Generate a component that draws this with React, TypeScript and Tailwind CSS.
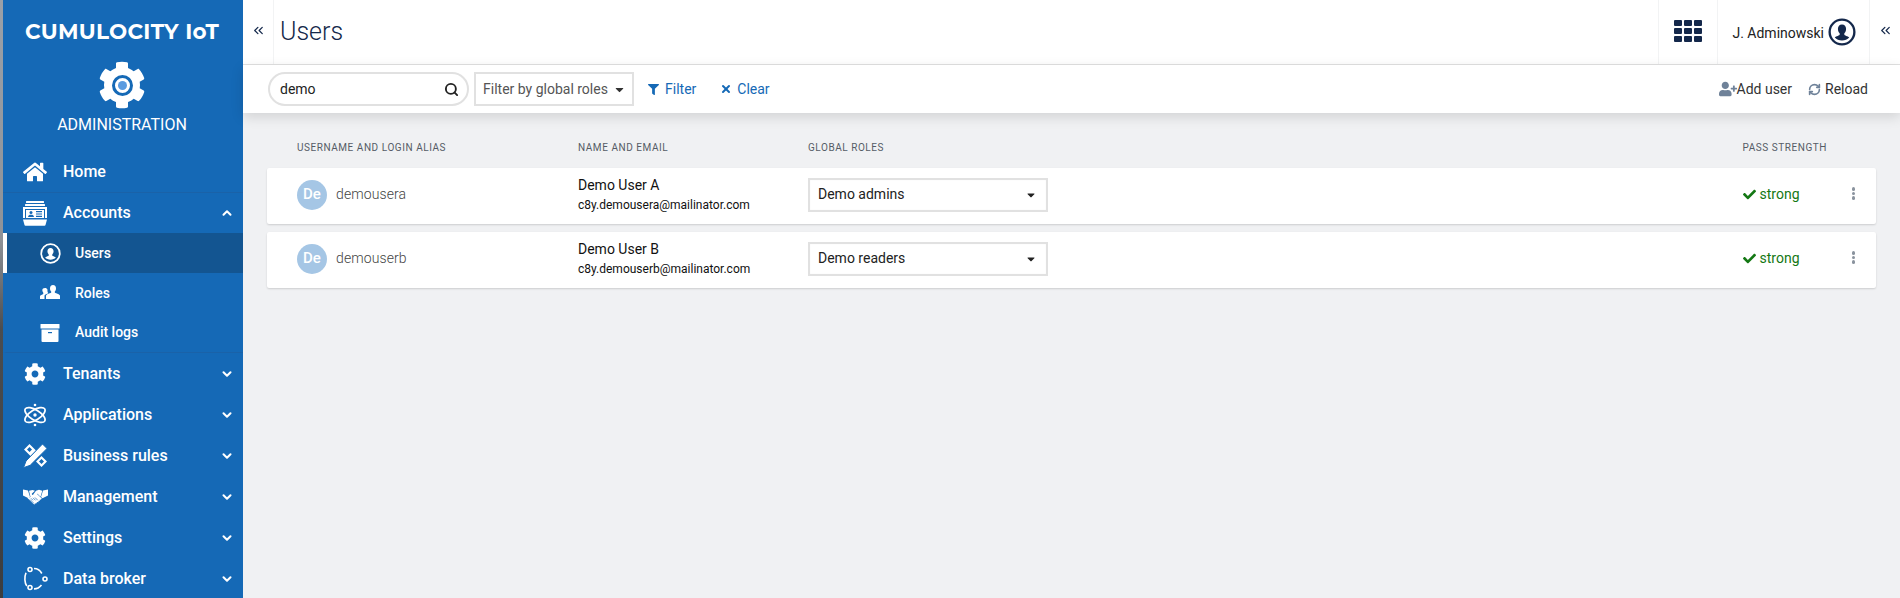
import { ChevronDown, ChevronUp, ChevronsLeft, RefreshCw, Search, X } from "lucide-react";
import { FaCaretDown, FaCheck, FaCog, FaFilter, FaHome, FaUserPlus } from "react-icons/fa";
import type { ReactNode } from "react";

const navy = "#14284b";

function UserCircle({ size = 24, color = "currentColor" }: { size?: number; color?: string }) {
    return (
        <svg width={size} height={size} viewBox="0 0 24 24" fill="none">
            <circle cx="12" cy="12" r="10.6" stroke={color} strokeWidth="2" />
            <path
                d="M12 5.600c2.200 0 3.500 1.700 3.500 3.900 0 1.500-.6 2.800-1.500 3.600v1.200c0 .6 3 1.200 4.200 2.400-1.500 1.600-3.700 2.500-6.200 2.500s-4.700-.9-6.200-2.500c1.200-1.200 4.200-1.800 4.200-2.400v-1.200c-.9-.8-1.500-2.100-1.500-3.600 0-2.200 1.300-3.900 3.500-3.900z"
                fill={color}
            />
        </svg>
    );
}

function AccountsIcon() {
    return (
        <svg width="24" height="25" viewBox="0 0 24 25" fill="white">
            <rect x="3" y="0" width="18" height="2" rx="0.500" />
            <rect x="2" y="3" width="20" height="2" rx="0.500" />
            <path d="M0 6h24v11h-2V8H2v9H0z" />
            <rect x="3" y="9" width="18" height="8" />
            <circle cx="8" cy="11.500" r="1.500" fill="#1569b6" />
            <path d="M5 16c.2-1.600 1.300-2.200 3-2.200s2.800.6 3 2.200z" fill="#1569b6" />
            <path d="M13 10h6v1.200h-6zM13 12.400h6v1.200h-6zM13 14.800h6V16h-6z" fill="#1569b6" />
            <path d="M0 18.500h24L22.500 24a1 1 0 0 1-1 .8h-19a1 1 0 0 1-1-.8z" />
        </svg>
    );
}

function RolesIcon() {
    return (
        <svg width="20" height="16" viewBox="0 0 20 16" fill="white">
            <path d="M13 0c2 0 3 1.500 3 3.500 0 1.300-.5 2.400-1.200 3.100v1c0 .6 4.200 1.200 5.200 3V14H6v-3.400c1-1.800 5.200-2.400 5.200-3v-1C10.500 5.900 10 4.800 10 3.500 10 1.500 11 0 13 0z" />
            <path d="M5 3c1.200 0 2.100.7 2.500 1.700-.2 1.300.1 2.600.8 3.500-1.500.6-3.300 1.200-3.800 2.400V14H0v-3c.6-1.300 3.300-1.700 3.300-2.300v-1C2.700 7.100 2.300 6.200 2.300 5.300 2.300 3.900 3.400 3 5 3z" />
        </svg>
    );
}

function ArchiveIcon() {
    return (
        <svg width="20" height="18" viewBox="0 0 20 18" fill="white">
            <rect x="0.500" y="0" width="19" height="4.500" rx="0.500" />
            <path d="M1.500 5.500h17V17a1 1 0 0 1-1 1h-15a1 1 0 0 1-1-1z" />
            <rect x="8" y="8" width="4" height="1.200" fill="#1569b6" />
        </svg>
    );
}

function AtomIcon() {
    return (
        <svg width="24" height="24" viewBox="0 0 24 24" fill="none" stroke="white" strokeWidth="1.700">
            <ellipse cx="12" cy="12" rx="11.500" ry="5" transform="rotate(32 12 12)" />
            <ellipse cx="12" cy="12" rx="11.500" ry="5" transform="rotate(-32 12 12)" />
            <circle cx="12" cy="12" r="1.700" fill="white" stroke="none" />
            <circle cx="12" cy="2" r="1.300" fill="white" stroke="none" />
            <circle cx="12" cy="22" r="1.300" fill="white" stroke="none" />
        </svg>
    );
}

function RulesIcon() {
    return (
        <svg width="25" height="25" viewBox="0 0 25 25" fill="white">
            <path d="M1 6.500 6.500 1l6.500 6.500L7.500 13zM13 18.500l5.500-5.500 5.500 5.500-5.500 5.500z" />
            <path d="M6.500 4 9 6.500 6.500 9 4 6.500zM18.500 16l2.500 2.500-2.500 2.500-2.500-2.500z" fill="#1569b6" />
            <path d="M19.500 1 24 5.500 7.200 22.300 0.500 24.700 3 18z" stroke="#1569b6" strokeWidth="1" />
        </svg>
    );
}

function HandshakeIcon() {
    return (
        <svg width="25" height="17" viewBox="0 0 25 17" fill="white">
            <path d="M0 1.500 5 2.500l2 6.500-1.500 1.200L0 7.500z" />
            <path d="M25 1.500 20 2.500l-2 6.500 1.500 1.200L25 7.500z" />
            <path d="M6 2.800 9.500 2 12 2.800 9 5.500c-.6.8.4 1.900 1.500 1.300L13 5l5.800 5.500-1 1.300-.9-.3-.1 1.300-1.200.2-.3 1.200-1.300-.1-.5 1.200-1.300.3-.5 1-1.200-.5-6-6L7.500 9z" />
            <path d="M13 2.700 16 1.800l3.300 1L17.500 8.800 14.500 5.800 11.200 7c-.8.200-1.200-.3-.8-.8z" />
            <path d="M8 10.300 10 12.300M10 9.800l2.500 2.500M12 9.500l2.800 2.800M7 11.500l4 4" stroke="#1569b6" strokeWidth="0.700" fill="none" />
        </svg>
    );
}

function BrokerIcon() {
    return (
        <svg width="25" height="25" viewBox="0 0 25 25" fill="none" stroke="white" strokeWidth="1.600">
            <circle cx="7" cy="3.500" r="2" />
            <circle cx="22" cy="13" r="2" />
            <circle cx="7" cy="21.500" r="2" />
            <path d="M11 2.500c3.200 0 6.200 2 7.800 5M18.500 19c-2 2.600-4.700 3.900-7.500 3.900M3.800 20C1.600 17 1.200 11 3 6.800" />
        </svg>
    );
}

function AppGrid() {
    return (
        <div className="grid w-[29px] grid-cols-3 gap-[2px]">
            {Array.from({ length: 9 }).map((_, i) => (
                <div key={i} className="h-[6px] rounded-[1px] bg-[#14284b]" />
            ))}
        </div>
    );
}

function NavItem({ icon, label, open, chevron = true, className = "h-[41px]" }: { icon: ReactNode; label: string; open?: boolean; chevron?: boolean; className?: string }) {
    return (
        <div className={`flex items-center pr-[9px] pl-[17px] text-white ${className}`}>
            <div className="flex w-[30px] justify-center">{icon}</div>
            <span className="ml-[13px] flex-1 text-[16px] font-medium">{label}</span>
            {chevron && (open ? <ChevronUp size={14} strokeWidth={3.500} /> : <ChevronDown size={14} strokeWidth={3.500} />)}
        </div>
    );
}

function SubItem({ icon, label, className = "border-l-[4px] border-transparent" }: { icon: ReactNode; label: string; className?: string }) {
    return (
        <div className={`flex h-[40px] items-center text-white ${className}`}>
            <div className="ml-[32px] flex w-[22px] justify-center">{icon}</div>
            <span className="ml-[14px] text-[14px] font-medium">{label}</span>
        </div>
    );
}

function Sidebar() {
    return (
        <aside className="flex w-[240px] shrink-0 flex-col overflow-hidden bg-[#1569b6]">
            <div className="flex flex-col items-center pt-[18px] pr-[2px]">
                <div className="font-['Montserrat','Open_Sans',sans-serif] text-[21.500px] leading-[26px] font-bold tracking-[0.3px] text-white">CUMULOCITY IoT</div>
                <div className="relative mt-[18px] flex h-[46px] w-[46px] items-center justify-center text-white">
                    <FaCog size={48} className="shrink-0" />
                    <div className="absolute h-[21px] w-[21px] rounded-full border-[3px] border-[#1569b6] bg-white" />
                    <div className="absolute h-[9px] w-[9px] rounded-full bg-[#5a9be0]" />
                </div>
                <div className="mt-[6px] text-[16px] leading-[22px] text-white">ADMINISTRATION</div>
            </div>
            <nav className="mt-[16px] flex flex-col">
                <NavItem icon={<FaHome size={24} />} label="Home" chevron={false} className="h-[41px] border-b border-[#1a62a8]" />
                <NavItem icon={<AccountsIcon />} label="Accounts" open className="h-[40px]" />
                <SubItem icon={<UserCircle size={21} color="white" />} label="Users" className="border-l-[4px] border-white bg-[#135591]" />
                <SubItem icon={<RolesIcon />} label="Roles" />
                <SubItem icon={<ArchiveIcon />} label="Audit logs" className="border-b border-l-[4px] border-b-[#1a62a8] border-l-transparent" />
                <NavItem icon={<FaCog size={22} />} label="Tenants" />
                <NavItem icon={<AtomIcon />} label="Applications" />
                <NavItem icon={<RulesIcon />} label="Business rules" />
                <NavItem icon={<HandshakeIcon />} label="Management" />
                <NavItem icon={<FaCog size={22} />} label="Settings" />
                <NavItem icon={<BrokerIcon />} label="Data broker" />
            </nav>
        </aside>
    );
}

function Header() {
    return (
        <header className="flex h-[65px] shrink-0 items-stretch border-b border-[#e1e1e1] bg-white">
            <div className="flex w-[31px] items-center justify-center border-r border-[#f2f3f4] pb-[4px]">
                <ChevronsLeft size={15} color={navy} strokeWidth={2} />
            </div>
            <h1 className="ml-[6px] self-center pb-[1px] text-[25px] font-light text-[#14284b]">Users</h1>
            <div className="ml-auto flex w-[59px] items-center justify-center border-l border-[#f2f3f4] pb-[3px]">
                <AppGrid />
            </div>
            <div className="flex w-[153px] items-center justify-end gap-[4px] border-x border-[#f2f3f4] pr-[13px]">
                <span className="pt-[3px] text-[14px] text-[#222]">J. Adminowski</span>
                <UserCircle size={28} color={navy} />
            </div>
            <div className="flex w-[30px] items-center justify-center pb-[3px]">
                <ChevronsLeft size={15} color={navy} strokeWidth={2} />
            </div>
        </header>
    );
}

function Toolbar() {
    return (
        <div className="relative z-10 flex h-[48px] shrink-0 items-center bg-white pr-[32px] pl-[25px] shadow-[0_4px_12px_rgba(0,0,0,0.13)]">
            <div className="flex h-[34px] w-[201px] items-center justify-between rounded-full border-2 border-[#e1e1e1] pr-[8px] pl-[10px]">
                <span className="text-[14px] text-[#222]">demo</span>
                <Search size={15} strokeWidth={3} color="#222" />
            </div>
            <div className="ml-[5px] flex h-[34px] w-[160px] items-center border-2 border-[#e1e1e1] pl-[7px] text-[14px] whitespace-nowrap text-[#555]">
                <span>Filter by global roles</span>
                <FaCaretDown size={13} className="ml-[5px]" color="#333" />
            </div>
            <div className="ml-[14px] flex items-center gap-[6px] text-[14px] text-[#1569b6]">
                <FaFilter size={11} />
                <span>Filter</span>
            </div>
            <div className="ml-[24px] flex items-center gap-[5px] text-[14px] text-[#1569b6]">
                <X size={12} strokeWidth={4} />
                <span>Clear</span>
            </div>
            <div className="ml-auto flex items-center text-[14px] text-[#333]">
                <FaUserPlus size={18} color="#6f8299" />
                <span>Add user</span>
                <RefreshCw size={13} strokeWidth={3} color="#6f8299" className="ml-[16px]" />
                <span className="ml-[4px]">Reload</span>
            </div>
        </div>
    );
}

function Row({ username, name, email, role }: { username: string; name: string; email: string; role: string }) {
    return (
        <div className="flex h-[56px] items-center rounded-[2px] bg-white pb-[3px] pl-[30px] shadow-[0_1px_2px_rgba(0,0,0,0.15)]">
            <div className="flex w-[281px] items-center">
                <div className="flex h-[30px] w-[30px] items-center justify-center rounded-full bg-[#a5c6e5] text-[15px] font-medium text-white">De</div>
                <span className="ml-[9px] text-[14px] font-light tracking-[0.1px] text-[#444]">{username}</span>
            </div>
            <div className="w-[230px]">
                <div className="text-[14px] leading-[20px] text-[#111]">{name}</div>
                <div className="mt-[1px] text-[12px] leading-[18px] text-[#111]">{email}</div>
            </div>
            <div className="flex h-[34px] w-[240px] items-center justify-between border-2 border-[#e1e1e1] pr-[8px] pl-[8px] text-[14px] text-[#222] shadow-[inset_0_0_1px_rgba(0,0,0,0.1)]">
                <span>{role}</span>
                <FaCaretDown size={12} color="#222" className="mr-[1px]" />
            </div>
            <div className="ml-auto flex w-[109px] items-center text-[14px] text-[#147814]">
                <FaCheck size={13} />
                <span className="ml-[4px]">strong</span>
            </div>
            <div className="mr-[21px] flex flex-col gap-[1px] self-start pt-[19px]">
                <div className="h-[3.500px] w-[3.500px] rounded-full bg-[#8a939e]" />
                <div className="h-[3.500px] w-[3.500px] rounded-full bg-[#8a939e]" />
                <div className="h-[3.500px] w-[3.500px] rounded-full bg-[#8a939e]" />
            </div>
        </div>
    );
}

export default function App() {
    return (
        <div className="flex h-[598px] w-[1900px] overflow-hidden bg-[#f0f1f3] font-['Roboto',sans-serif]">
            <div className="w-[3px] shrink-0 bg-[linear-gradient(to_bottom,#9aa0a8_0%,#8e9298_40%,#4b4d50_55%,#3c3d3f_100%)]" />
            <Sidebar />
            <main className="flex min-w-0 flex-1 flex-col">
                <Header />
                <Toolbar />
                <div className="flex-1 pr-[24px] pl-[24px]">
                    <div className="flex h-[55px] items-center pt-[13px] pl-[30px] text-[10px] tracking-[0.55px] text-[#555c66] uppercase">
                        <span className="w-[281px]">Username and login alias</span>
                        <span className="w-[230px]">Name and email</span>
                        <span>Global roles</span>
                        <span className="mr-[49px] ml-auto">Pass strength</span>
                    </div>
                    <div className="flex flex-col gap-[8px]">
                        <Row username="demousera" name="Demo User A" email="c8y.demousera@mailinator.com" role="Demo admins" />
                        <Row username="demouserb" name="Demo User B" email="c8y.demouserb@mailinator.com" role="Demo readers" />
                    </div>
                </div>
            </main>
        </div>
    );
}
